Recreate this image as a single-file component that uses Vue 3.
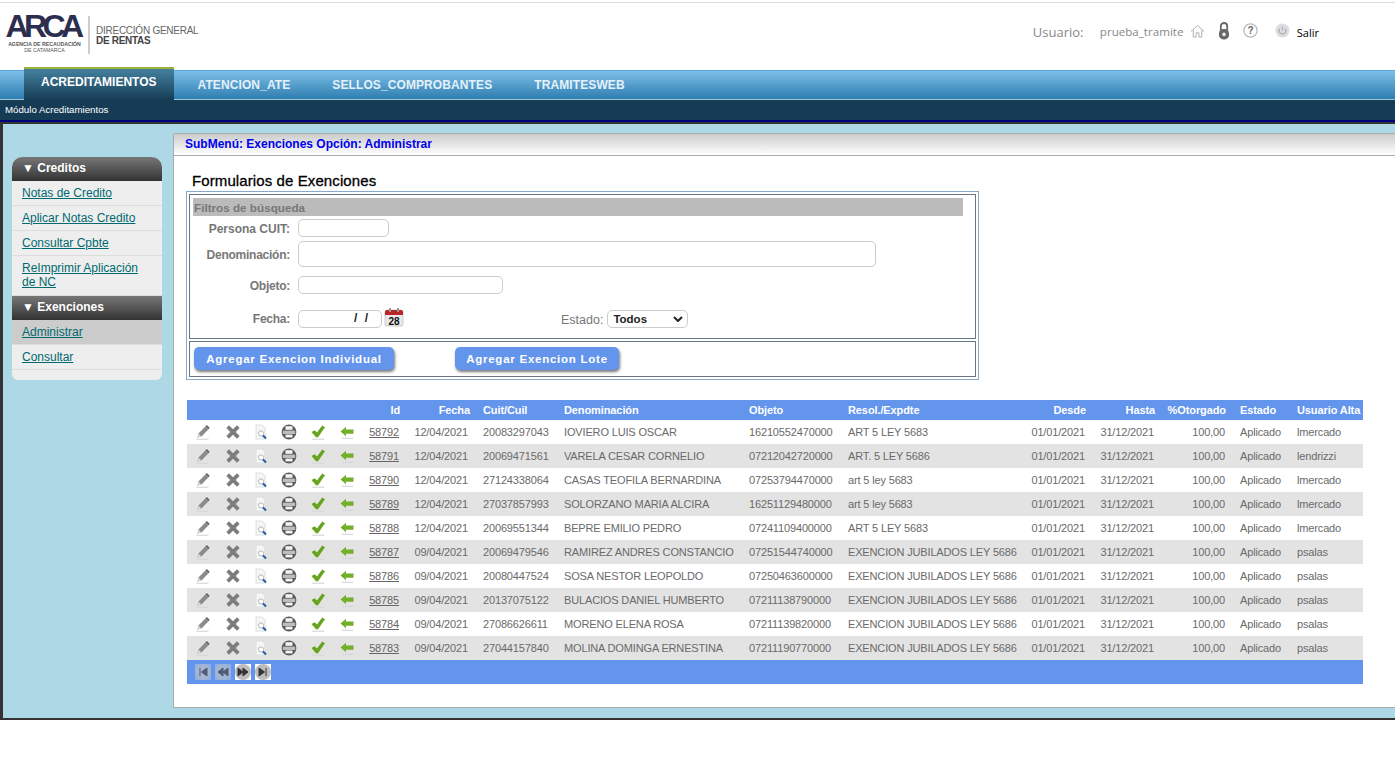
<script setup>
const tabs = ['ATENCION_ATE', 'SELLOS_COMPROBANTES', 'TRAMITESWEB']
const icons = ['pencil', 'cross', 'search', 'printer', 'check', 'arrow']
const aplicar = 'Aplicado'
const rows = [
  ['58792', '12/04/2021', '20083297043', 'IOVIERO LUIS OSCAR', '16210552470000', 'ART 5 LEY 5683', 'lmercado'],
  ['58791', '12/04/2021', '20069471561', 'VARELA CESAR CORNELIO', '07212042720000', 'ART. 5 LEY 5686', 'lendrizzi'],
  ['58790', '12/04/2021', '27124338064', 'CASAS TEOFILA BERNARDINA', '07253794470000', 'art 5 ley 5683', 'lmercado'],
  ['58789', '12/04/2021', '27037857993', 'SOLORZANO MARIA ALCIRA', '16251129480000', 'art 5 ley 5683', 'lmercado'],
  ['58788', '12/04/2021', '20069551344', 'BEPRE EMILIO PEDRO', '07241109400000', 'ART 5 LEY 5683', 'lmercado'],
  ['58787', '09/04/2021', '20069479546', 'RAMIREZ ANDRES CONSTANCIO', '07251544740000', 'EXENCION JUBILADOS LEY 5686', 'psalas'],
  ['58786', '09/04/2021', '20080447524', 'SOSA NESTOR LEOPOLDO', '07250463600000', 'EXENCION JUBILADOS LEY 5686', 'psalas'],
  ['58785', '09/04/2021', '20137075122', 'BULACIOS DANIEL HUMBERTO', '07211138790000', 'EXENCION JUBILADOS LEY 5686', 'psalas'],
  ['58784', '09/04/2021', '27086626611', 'MORENO ELENA ROSA', '07211139820000', 'EXENCION JUBILADOS LEY 5686', 'psalas'],
  ['58783', '09/04/2021', '27044157840', 'MOLINA DOMINGA ERNESTINA', '07211190770000', 'EXENCION JUBILADOS LEY 5686', 'psalas']
]
const colWidths = [31, 29, 28, 28, 29, 29, 42, 80, 81, 185, 99, 172, 67, 69, 71, 70, 66]
</script>

<template>
  <div class="page">
    <svg class="defs" width="0" height="0">
      <symbol id="pencil" viewBox="0 0 16 16">
        <path d="M1.5 15.3h12" stroke="#d8d8d8" stroke-width="1.2" />
        <path d="M2.5 13.5l1-4 7-7.3 3 3-7 7.2z" fill="#8c8c8c" />
        <path d="M2.5 13.5l1-4 3 3.1z" fill="#d4d4d4" />
        <path d="M10.5 2.2l3 3 1.2-1.4-3-2.9z" fill="#666" />
      </symbol>
      <symbol id="cross" viewBox="0 0 16 16">
        <path d="M2.7 2.7l10.6 10.6M13.3 2.7L2.7 13.3" stroke="#7d7d7d" stroke-width="3.8" />
      </symbol>
      <symbol id="search" viewBox="0 0 16 16">
        <path d="M3 1h6l3 3v11H3z" fill="#f6f6f6" stroke="#dedede" />
        <circle cx="8" cy="9.5" r="2.6" fill="#fff" stroke="#b4b4c4" />
        <path d="M10 11.5l3 3" stroke="#1c5a9c" stroke-width="2" />
      </symbol>
      <symbol id="printer" viewBox="0 0 16 16">
        <circle cx="8" cy="8" r="7.4" fill="#5a5a5a" />
        <rect x="4.5" y="2.2" width="7" height="3.6" fill="#f2f2f2" />
        <rect x="1.8" y="6.6" width="12.4" height="3.4" fill="#bdbdbd" />
        <rect x="4.5" y="10.6" width="7" height="2.8" fill="#f4f4f4" />
      </symbol>
      <symbol id="check" viewBox="0 0 16 16">
        <path d="M2 15.2h12" stroke="#d8d8d8" stroke-width="1.2" />
        <path d="M1.5 8l3.2-1.8 2.3 2.4L12.2 1.6 15 3.2 8 13.2H6z" fill="#66a520" />
      </symbol>
      <symbol id="arrow" viewBox="0 0 16 16">
        <path d="M3 14.4h11" stroke="#d8d8d8" stroke-width="1.2" />
        <path d="M1.5 7.5L7 2.8v2.7h7.5v4.2H7v2.6z" fill="#72b02a" />
      </symbol>
    </svg>

    <header class="top">
      <div class="logo">
        <div class="arca">
          <span class="arca-word">ARCA</span>
          <span class="arca-sub">AGENCIA DE RECAUDACIÓN</span>
          <span class="arca-sub light">DE CATAMARCA</span>
        </div>
        <div class="rentas">
          <span>DIRECCIÓN GENERAL</span>
          <b>DE RENTAS</b>
        </div>
      </div>
      <div class="user">
        <span class="user-label">Usuario:</span>
        <span class="user-name">prueba_tramite</span>
        <svg class="u-home" width="15" height="14" viewBox="0 0 16 14" fill="none" stroke="#aaa">
          <path d="M1 7.5L8 1l7 6.5M3.5 6v7.5h3V9h3v4.5h3V6" />
        </svg>
        <svg class="u-lock" width="12" height="18" viewBox="0 0 12 18">
          <path d="M2.8 8V4.2a3.2 3.2 0 0 1 6.4 0V8" fill="none" stroke="#666" stroke-width="1.8" />
          <rect x="1" y="7" width="10" height="10.4" rx="4.4" fill="#666" />
          <circle cx="6" cy="12.4" r="1.8" fill="#eee" />
        </svg>
        <svg class="u-help" width="15" height="15" viewBox="0 0 15 15">
          <circle cx="7.5" cy="7.5" r="6.6" fill="none" stroke="#bbb" stroke-width="1.3" />
          <text x="7.5" y="11.2" text-anchor="middle" class="help-q">?</text>
        </svg>
        <svg class="u-power" width="15" height="15" viewBox="0 0 15 15">
          <circle cx="7.5" cy="7.5" r="7" fill="#dcdce2" />
          <path d="M4.6 5.8a3.4 3.4 0 1 0 5.8 0M7.5 3.6v4" fill="none" stroke="#aaa" stroke-width="1.1" />
        </svg>
        <span class="salir">Salir</span>
      </div>
    </header>

    <nav class="tabs">
      <a class="tab active">ACREDITAMIENTOS</a>
      <a v-for="t in tabs" :key="t" class="tab">{{ t }}</a>
    </nav>
    <div class="modbar">Módulo Acreditamientos</div>

    <main class="main">
      <aside class="side">
        <div class="side-h first">▼ Creditos</div>
        <a class="side-i">Notas de Credito</a>
        <a class="side-i">Aplicar Notas Credito</a>
        <a class="side-i">Consultar Cpbte</a>
        <a class="side-i tall">ReImprimir Aplicación de NC</a>
        <div class="side-h">▼ Exenciones</div>
        <a class="side-i current">Administrar</a>
        <a class="side-i">Consultar</a>
        <div class="side-end"></div>
      </aside>

      <section class="panel">
        <div class="crumb">SubMenú: Exenciones Opción: Administrar</div>
        <h1 class="title">Formularios de Exenciones</h1>

        <div class="box">
          <div class="cell filters">
            <div class="f-head">Filtros de búsqueda</div>
            <div class="f-row r1">
              <label>Persona CUIT:</label>
              <div class="inp w91"></div>
            </div>
            <div class="f-row r2">
              <label>Denominación:</label>
              <div class="inp w578"></div>
            </div>
            <div class="f-row r3">
              <label>Objeto:</label>
              <div class="inp w205"></div>
            </div>
            <div class="f-row r4">
              <label>Fecha:</label>
              <div class="inp w84 date">/ /</div>
              <svg class="cal" width="20" height="20" viewBox="0 0 20 20">
                <rect x="1" y="3" width="18" height="16" rx="2" fill="#e8e8e8" stroke="#ccc" />
                <path d="M1 8V5a2 2 0 0 1 2-2h14a2 2 0 0 1 2 2v3z" fill="#b8262a" />
                <rect x="5" y="1" width="2" height="4" fill="#999" />
                <rect x="13" y="1" width="2" height="4" fill="#999" />
                <text x="10" y="17.5" text-anchor="middle" class="cal-n">28</text>
              </svg>
              <span class="est-l">Estado:</span>
              <div class="sel">
                <span>Todos</span>
                <svg width="10" height="6" viewBox="0 0 10 6" fill="none" stroke="#222" stroke-width="2">
                  <path d="M1 1l4 4 4-4" />
                </svg>
              </div>
            </div>
          </div>
          <div class="cell actions">
            <button class="btn b1">Agregar Exencion Individual</button>
            <button class="btn b2">Agregar Exencion Lote</button>
          </div>
        </div>

        <table class="grid">
          <colgroup>
            <col v-for="(w, i) in colWidths" :key="i" :style="{ width: w + 'px' }" />
          </colgroup>
          <thead>
            <tr>
              <th colspan="6"></th>
              <th class="r id">Id</th>
              <th class="r fe">Fecha</th>
              <th>Cuit/Cuil</th>
              <th>Denominación</th>
              <th>Objeto</th>
              <th>Resol./Expdte</th>
              <th class="r">Desde</th>
              <th class="r">Hasta</th>
              <th class="r">%Otorgado</th>
              <th class="est">Estado</th>
              <th>Usuario Alta</th>
            </tr>
          </thead>
          <tbody>
            <tr v-for="r in rows" :key="r[0]">
              <td v-for="ic in icons" :key="ic" class="ic">
                <svg width="16" height="16"><use :href="'#' + ic" /></svg>
              </td>
              <td class="r id"><u>{{ r[0] }}</u></td>
              <td class="r fe2">{{ r[1] }}</td>
              <td>{{ r[2] }}</td>
              <td>{{ r[3] }}</td>
              <td>{{ r[4] }}</td>
              <td>{{ r[5] }}</td>
              <td class="r d">01/01/2021</td>
              <td class="r d">31/12/2021</td>
              <td class="r d">100,00</td>
              <td class="est">{{ aplicar }}</td>
              <td>{{ r[6] }}</td>
            </tr>
          </tbody>
          <tfoot>
            <tr>
              <td colspan="17">
                <div class="pager">
                  <svg v-for="(g, i) in ['M5 4v8M12 4L6.5 8l5.5 4z', 'M8 4L3 8l5 4zM13 4L8 8l5 4z', 'M3 4l5 4-5 4zM8 4l5 4-5 4z', 'M4 4l5.5 4L4 12zM11 4v8']"
                       :key="i" :class="['pg', i < 2 ? 'off' : 'on']" width="16" height="16" viewBox="0 0 16 16">
                    <circle cx="8" cy="8" r="8" :fill="i < 2 ? '#a5b4cf' : '#bdbdbd'" />
                    <path :d="g" :fill="i < 2 ? '#4d5a78' : '#333'" :stroke="i < 2 ? '#4d5a78' : '#333'" />
                  </svg>
                </div>
              </td>
            </tr>
          </tfoot>
        </table>
      </section>
    </main>
  </div>
</template>

<style>
html, body { margin: 0; background: #fff; }
</style>

<style scoped>
.page { font-family: "Liberation Sans", Arial, sans-serif; position: relative; padding-top: 2px; }
.defs { position: absolute; }
.top { border-top: 1px solid #ddd; box-sizing: border-box; display: flex; justify-content: space-between; height: 68px; }
.logo { display: flex; padding: 11px 0 0 7px; }
.arca { width: 75px; padding-right: 6px; border-right: 2px solid #ccc; height: 38px; margin-top: 2px; display: flex; flex-direction: column; align-items: center; color: #2c2e4e; }
.arca-word { font-weight: 700; font-size: 32px; line-height: 26px; letter-spacing: -4.6px; margin: -3px 4px 2px 0; }
.arca-sub { font-size: 5.2px; font-weight: 700; line-height: 6px; white-space: nowrap; color: #555; }
.arca-sub.light { font-weight: 400; }
.rentas { display: flex; flex-direction: column; margin: 12px 0 0 6px; font-size: 10px; line-height: 10px; letter-spacing: -.25px; color: #666; white-space: nowrap; }
.rentas b { color: #444; letter-spacing: -.3px; }
.user { display: flex; align-items: center; height: 57px; font-family: "Open Sans", sans-serif; color: #888; padding-right: 76px; }
.user-label { font-size: 13px; width: 67px; }
.user-name { font-size: 11.6px; width: 90px; white-space: nowrap; }
.u-home { margin-right: 13px; margin-top: -2px; }
.u-lock { margin-right: 13px; margin-top: -1px; }
.u-help { margin-right: 17px; margin-top: -3px; }
.u-power { margin-right: 7px; margin-top: -2px; }
.help-q { font: 700 10px "Liberation Sans", sans-serif; fill: #666; }
.salir { font-size: 11px; color: #000; margin-top: 1px; }

.tabs { height: 28px; border-top: 1px solid #5aa5d5; border-bottom: 1px solid #9cc6dc; background: linear-gradient(#7cbfe8, #2e7db0); display: flex; padding-left: 24px; position: relative; }
.tab { font-size: 12px; font-weight: 700; color: #e4f1f9; letter-spacing: .1px; line-height: 28px; white-space: nowrap; padding: 0 21px; }
.tab.active { height: 31px; margin-top: -4px; border-top: 2px solid #9db23a; background: linear-gradient(#44819f, #163c55); color: #fff; line-height: 27px; padding: 0 17px; letter-spacing: 0; margin-right: 3px; }
.modbar { height: 20px; background: #163c55; color: #fff; font-size: 9.7px; line-height: 20px; padding-left: 5px; border-bottom: 2px solid #00007f; }
.main { height: 594px; border-top: 2px solid #333; border-left: 3px solid #333; border-bottom: 2px solid #333; background: #add8e6; display: flex; align-items: flex-start; position: relative; }
.side { width: 150px; margin: 33px 0 0 9px; background: #eee; border-radius: 10px 10px 6px 6px; overflow: hidden; flex: none; }
.side-h { height: 24px; line-height: 23px; background: linear-gradient(#777, #333); color: #fff; font-weight: 700; font-size: 12px; padding-left: 10px; box-sizing: border-box; }
.side-i { display: block; padding: 5px 10px; font-size: 12px; line-height: 14px; color: #006a70; text-decoration: underline; border-bottom: 1px solid #ddd; }
.side-i.tall { padding-bottom: 6px; }
.side-i.current { background: #ccc; }
.side-end { height: 10px; }
.panel { margin: 9px 0 0 11px; flex: 1; height: 573px; background: #fff; border: 1px solid #aaa; border-right: 0; border-radius: 3px 0 0 0; }
.crumb { height: 22px; line-height: 21px; box-sizing: border-box; border-bottom: 1px solid #aaa; background: linear-gradient(#ccc, #fff); padding-left: 11px; font-size: 12px; font-weight: 700; color: #0000ee; }
.title { margin: 16px 0 0 18px; font-size: 15px; line-height: 18px; font-weight: 400; color: #000; -webkit-text-stroke: .3px #000; letter-spacing: .1px; height: 18px; }
.box { margin: 1px 0 0 12px; width: 787px; border: 1px solid #8aa9c8; padding: 2px; }
.cell { border: 1px solid #667788; }
.filters { height: 140px; padding: 3px 12px 0 3px; margin-bottom: 2px; }
.f-head { height: 18px; line-height: 20px; background: #bbb; color: #777; font-size: 11.7px; font-weight: 700; padding-left: 1px; }
.f-row { display: flex; align-items: center; font-size: 12px; color: #777; font-weight: 700; }
.f-row label { width: 97px; text-align: right; margin-right: 8px; white-space: nowrap; letter-spacing: -.25px; padding-top: 2px; }
.r1 label { letter-spacing: 0; }
.r4 label { padding-top: 0; }
.r1 { margin-top: 3px; } .r2 { margin-top: 4px; } .r3 { margin-top: 9px; } .r4 { margin-top: 16px; }
.inp { height: 18px; border: 1px solid #ccc; border-radius: 5px; box-sizing: border-box; }
.w91 { width: 91px; } .w578 { width: 578px; height: 26px; } .w205 { width: 205px; } .w84 { width: 84px; }
.date { text-align: right; font-size: 12px; color: #222; line-height: 15px; padding-right: 13px; word-spacing: 4px; }
.cal { margin: -4px 0 0 2px; }
.cal-n { font: 700 10px "Liberation Sans", sans-serif; fill: #111; }
.est-l { margin-left: 157px; font-weight: 400; font-size: 12.5px; margin-right: 4px; padding-top: 1px; }
.sel { width: 81px; height: 18px; box-sizing: border-box; border: 1px solid #ccc; border-radius: 5px; display: flex; align-items: center; justify-content: space-between; padding: 0 4px 0 5px; color: #222; font-size: 11.5px; }
.actions { height: 36px; padding: 5px 0 0 4px; box-sizing: border-box; display: flex; }
.btn { border: 0; height: 23px; padding: 0; border-radius: 5px; background: #6495ed; color: #fff; font: 700 11.5px "Liberation Sans", sans-serif; letter-spacing: .75px; box-shadow: 1px 2px 3px #777; }
.b1 { width: 200px; } .b2 { width: 164px; margin-left: 61px; }

.grid { margin: 20px 0 0 13px; width: 1176px; table-layout: fixed; border-collapse: collapse; font-size: 11px; color: #6a6a6a; letter-spacing: -.15px; }
.grid th { background: #6495ed; color: #fff; height: 20px; padding: 0; text-align: left; font-weight: 700; font-size: 11px; letter-spacing: -.1px; white-space: nowrap; }
.grid td { height: 24px; padding: 0; white-space: nowrap; overflow: hidden; }
.grid tbody tr:nth-child(even) td { background: #e3e3e3; }
.grid th.r, .grid td.r { text-align: right; }
.grid th.id { padding-right: 3px; }
.grid td.id { padding-right: 4px; color: #666; }
.grid th.fe { padding-right: 13px; }
.grid td.fe2 { padding-right: 15px; }
.grid th.r:not(.id):not(.fe) { padding-right: 1px; }
.grid td.d { padding-right: 2px; }
.est { padding-left: 13px !important; }
.ic { text-align: center; line-height: 0; }
.grid tfoot td { background: #6495ed; }
.pager { display: flex; gap: 4px; padding-left: 8px; }
.pg.on { background: #fff; }
.pg.off { background: #8fb0ec; }
</style>
